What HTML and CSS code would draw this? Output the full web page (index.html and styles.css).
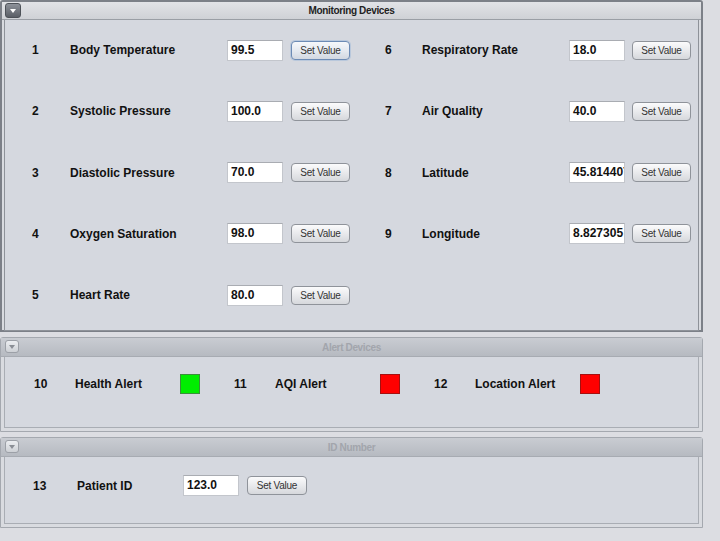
FILE: index.html
```html
<!DOCTYPE html>
<html>
<head>
<meta charset="utf-8">
<link rel="stylesheet" href="styles.css">
</head>
<body>
<div class="page">
  <section class="pane pane-active pane-1">
    <header class="pane-head">
      <span class="toggle toggle-dark"><span class="tri"></span></span>
      <span class="title">Monitoring Devices</span>
    </header>
    <div class="pane-body">
      <div class="grid-mon">
        <span class="num">1</span><span class="lbl">Body Temperature</span><span class="fld">99.5</span><span class="cell-btn"><span class="btn btn-focus">Set Value</span></span>
        <span class="num">6</span><span class="lbl">Respiratory Rate</span><span class="fld">18.0</span><span class="cell-btn"><span class="btn">Set Value</span></span>

        <span class="num">2</span><span class="lbl">Systolic Pressure</span><span class="fld">100.0</span><span class="cell-btn"><span class="btn">Set Value</span></span>
        <span class="num">7</span><span class="lbl">Air Quality</span><span class="fld">40.0</span><span class="cell-btn"><span class="btn">Set Value</span></span>

        <span class="num">3</span><span class="lbl">Diastolic Pressure</span><span class="fld">70.0</span><span class="cell-btn"><span class="btn">Set Value</span></span>
        <span class="num">8</span><span class="lbl">Latitude</span><span class="fld">45.81440749</span><span class="cell-btn"><span class="btn">Set Value</span></span>

        <span class="num">4</span><span class="lbl">Oxygen Saturation</span><span class="fld">98.0</span><span class="cell-btn"><span class="btn">Set Value</span></span>
        <span class="num">9</span><span class="lbl">Longitude</span><span class="fld">8.827305</span><span class="cell-btn"><span class="btn">Set Value</span></span>

        <span class="num">5</span><span class="lbl">Heart Rate</span><span class="fld">80.0</span><span class="cell-btn"><span class="btn">Set Value</span></span>
      </div>
    </div>
  </section>

  <section class="pane pane-2">
    <header class="pane-head">
      <span class="toggle"><span class="tri"></span></span>
      <span class="title">Alert Devices</span>
    </header>
    <div class="pane-body">
      <div class="grid-alert">
        <span class="num">10</span><span class="lbl">Health Alert</span><span class="led led-green"></span>
        <span class="num">11</span><span class="lbl">AQI Alert</span><span class="led led-red"></span>
        <span class="num">12</span><span class="lbl">Location Alert</span><span class="led led-red"></span>
      </div>
    </div>
  </section>

  <section class="pane pane-3">
    <header class="pane-head">
      <span class="toggle"><span class="tri"></span></span>
      <span class="title">ID Number</span>
    </header>
    <div class="pane-body">
      <div class="grid-id">
        <span class="num">13</span><span class="lbl">Patient ID</span><span class="fld">123.0</span><span class="cell-btn"><span class="btn btn-wide">Set Value</span></span>
      </div>
    </div>
  </section>
</div>
</body>
</html>
```

FILE: styles.css
```css
html, body {
  margin: 0;
  padding: 0;
}
body {
  width: 720px;
  height: 541px;
  background: #dcdde2;
  font-family: "Liberation Sans", Arial, sans-serif;
  color: #111;
  overflow: hidden;
}
.page {
  display: flex;
  flex-direction: column;
  gap: 5px;
  width: 703px;
}
.pane {
  border: 1px solid #a4a8af;
  border-radius: 3px 3px 0 0;
  background: #d9dbe0;
  padding: 0 3px 4px 3px;
  box-sizing: border-box;
}
.pane-active {
  border: 2px solid #7c8088;
  padding: 0 2px 3px 2px;
}
.pane-1 { height: 332px; }
.pane-2 { height: 95px; }
.pane-3 { height: 91px; }

.pane-head {
  position: relative;
  height: 18px;
  margin: 0 -3px;
  display: flex;
  align-items: center;
  justify-content: center;
  background: linear-gradient(#c9ccd2, #b6bac1);
  border-bottom: 1px solid #a7abb2;
}
.pane-active .pane-head {
  margin: 0 -2px;
  height: 17px;
  background: linear-gradient(#e2e3e7, #cfd1d6);
  border-bottom: 1px solid #9a9ea5;
}
.title {
  font-size: 10px;
  font-weight: bold;
  letter-spacing: -0.35px;
  color: #a2a5ac;
}
.pane-active .title {
  color: #222;
}
.toggle {
  position: absolute;
  left: 4px;
  top: 2px;
  width: 14px;
  height: 13px;
  border: 1px solid #9ca0a7;
  border-radius: 3px;
  background: linear-gradient(#eceef1, #cdd0d5);
  display: flex;
  align-items: center;
  justify-content: center;
  box-sizing: border-box;
}
.toggle-dark {
  left: 3px;
  top: 1px;
  width: 16px;
  height: 15px;
  border-color: #4d5158;
  background: linear-gradient(#8e929a, #5a5e66);
}
.tri {
  width: 0;
  height: 0;
  border-left: 3px solid transparent;
  border-right: 3px solid transparent;
  border-top: 4px solid #8a8e95;
}
.toggle-dark .tri {
  border-top-color: #ffffff;
}

.pane-body {
  border: 1px solid #a9adb4;
  border-top: none;
  background: #d5d8df;
  box-sizing: border-box;
}
.pane-1 .pane-body { height: 311px; border-color: #8e9299; }
.pane-2 .pane-body { height: 71px; }
.pane-3 .pane-body { height: 67px; }

.num, .lbl {
  font-size: 12px;
  font-weight: bold;
  color: #111;
  white-space: nowrap;
}

.grid-mon {
  display: grid;
  grid-template-columns: 38px 157px 64px 94px 37px 147px 63px 59px;
  grid-auto-rows: 22px;
  row-gap: 39.3px;
  align-items: center;
  padding: 19px 0 0 27px;
}
.fld {
  width: 56px;
  height: 21px;
  box-sizing: border-box;
  background: #fff;
  border: 1px solid #c3c6cc;
  border-top-color: #a9acb2;
  font-size: 12px;
  font-weight: bold;
  color: #111;
  line-height: 19px;
  padding-left: 3px;
  overflow: hidden;
  white-space: nowrap;
}
.cell-btn {
  display: flex;
  align-items: center;
}
.btn {
  display: inline-flex;
  align-items: center;
  justify-content: center;
  width: 59px;
  height: 19px;
  box-sizing: border-box;
  border: 1px solid #8f939a;
  border-radius: 4px;
  background: linear-gradient(#fbfbfc, #e7e8eb 55%, #d6d8dc);
  font-size: 10px;
  letter-spacing: -0.25px;
  color: #333;
}
.btn-focus {
  border-color: #6c8bb5;
  background: linear-gradient(#f6f8fb, #e3e8ef 55%, #d2d8e1);
  box-shadow: 0 0 0 1px #b9c8dc;
}
.btn-wide { width: 60px; }

.grid-alert {
  display: grid;
  grid-template-columns: 41px 105px 54px 41px 105px 54px 41px 105px 20px;
  align-items: center;
  padding: 17px 0 0 29px;
  height: 20px;
}
.led {
  width: 20px;
  height: 20px;
  box-sizing: border-box;
}
.led-green {
  background: #00ee00;
  border: 1px solid #3a8f3a;
}
.led-red {
  background: #ff0000;
  border: 1px solid #a51010;
}

.grid-id {
  display: grid;
  grid-template-columns: 44px 106px 64px 60px;
  align-items: center;
  padding: 18px 0 0 28px;
}
```
